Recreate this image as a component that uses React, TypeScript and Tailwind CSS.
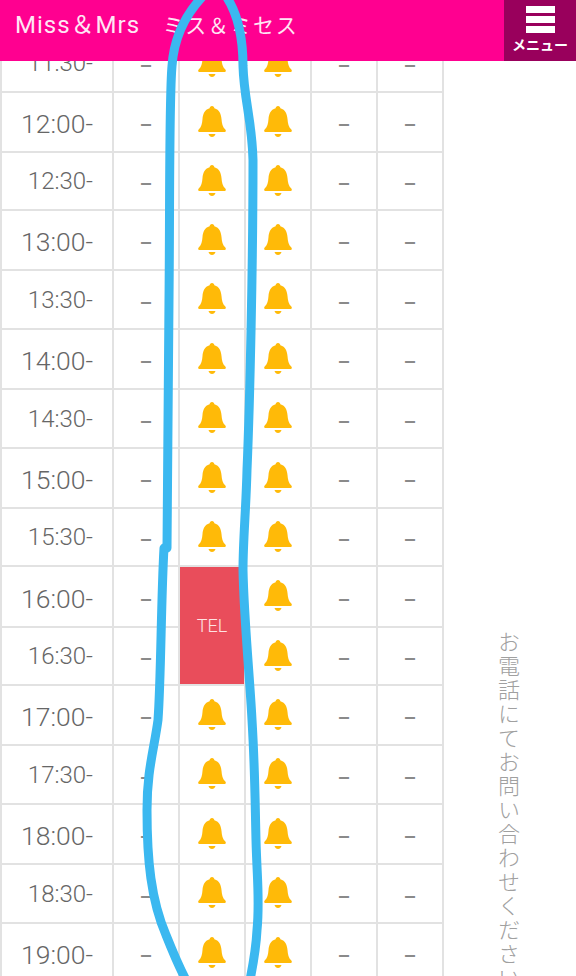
const times = [
  "11:30-", "12:00-", "12:30-", "13:00-", "13:30-", "14:00-", "14:30-", "15:00-",
  "15:30-", "16:00-", "16:30-", "17:00-", "17:30-", "18:00-", "18:30-", "19:00-",
];

const Bell = () => (
  <svg viewBox="0 0 28 33" className="w-[28px] h-[33px]" fill="#ffba08">
    <path d="M14 0c1.400 0 2.300 1 2.400 2.300C21.500 3.800 23 8 23.500 13c.4 4.500 1 8 3.800 10.500 1 1 .5 2.500-1 2.500H1.700c-1.500 0-2-1.500-1-2.500C3.500 21 4.100 17.500 4.500 13 5 8 6.500 3.800 11.600 2.300 11.700 1 12.600 0 14 0z" />
    <path d="M10.500 28h7c-.5 2-2 3-3.500 3s-3-1-3.500-3z" />
  </svg>
);

const Cell = ({ children }: { children?: React.ReactNode }) => (
  <div className="flex items-center justify-center border-r-2 border-b-2 border-[#e2e2e2]">
    {children}
  </div>
);

const Dash = () => <span className="pt-[6px] text-[20px] leading-none font-medium text-[#8a8a8a]">–</span>;

function TimeCell({ time }: { time: string }) {
  const isHour = time.endsWith(":00-");
  return (
    <div className="flex items-center justify-end pr-[19px] border-x-2 border-b-2 border-[#e2e2e2] font-light text-[#666666]">
      <span className={isHour ? "pt-[4px] text-[26.5px]" : "text-[24px]"}>{time}</span>
    </div>
  );
}

export default function App() {
  return (
    <div className="relative w-[576px] h-[976px] overflow-hidden bg-white font-['Roboto','Noto_Sans_CJK_JP',sans-serif]">
      <header className="relative z-10 flex h-[61px] bg-[#ff0090]">
        <h1 className="flex-1 pl-[15px] pt-[8px] text-[24px] leading-[32px] tracking-[1px] text-[#ffe6f5] font-normal whitespace-pre">
          Miss＆Mrs<span className="text-[21px] tracking-[1.6px] font-['Noto_Sans_CJK_JP',sans-serif]">　ミス＆ミセス</span>
        </h1>
        <button className="flex w-[72px] flex-col items-center bg-[#99005c] pt-[6px] text-white">
          <span className="flex w-[29px] flex-col gap-[3px]">
            <span className="h-[7px] bg-white" />
            <span className="h-[7px] bg-white" />
            <span className="h-[7px] bg-white" />
          </span>
          <span className="mt-[3px] text-[14px] leading-[16px] font-bold font-['Noto_Sans_CJK_JP',sans-serif]">
            メニュー
          </span>
        </button>
      </header>

      <div className="flex -mt-[27px]">
        <div className="grid w-[444px] shrink-0 grid-cols-[114px_66px_66px_66px_66px_66px] grid-rows-[59px_60px_58px_60px_59px_60px_59px_60px_58px_61px_58px_60px_59px_60px_59px_60px]">
          {times.map((time) => (
            <div key={time} className="contents">
              <TimeCell time={time} />
              <Cell><Dash /></Cell>
              {time === "16:00-" ? (
                <div className="row-span-2 border-r-2 border-b-2 border-[#e2e2e2]">
                  <div className="flex h-full items-center justify-center bg-[#e94d5b] text-[18px] text-[#ffe3e3] font-light">
                    TEL
                  </div>
                </div>
              ) : time === "16:30-" ? null : (
                <Cell><Bell /></Cell>
              )}
              <Cell><Bell /></Cell>
              <Cell><Dash /></Cell>
              <Cell><Dash /></Cell>
            </div>
          ))}
        </div>
        <div className="flex-1 pl-[53px] pt-[597px]">
          <p className="h-[400px] text-[22px] leading-[24px] tracking-[2px] text-[#a0a0a0] font-light [writing-mode:vertical-rl] font-['Noto_Sans_CJK_JP',sans-serif]">
            お電話にてお問い合わせください
          </p>
        </div>
      </div>

      {/* hand drawn marker on top of the screenshot */}
      <svg className="absolute inset-0 z-20 pointer-events-none" width="576" height="976" fill="none" stroke="#3bb8f0" strokeWidth="9" strokeLinecap="round" strokeLinejoin="round">
        <path d="M203 -4C186 14 174 36 172 66C169 100 170 200 169 300C168 400 168 480 167 548" />
        <path d="M164 548C161 600 161 680 158 720C154 750 147 770 147 810C147 860 151 900 166 935C172 950 178 965 186 980" />
        <path d="M226 -4C238 14 243 40 243 66C244 100 252 120 253 160C253 260 250 400 247 470C246 510 243 540 243 570C244 620 250 680 252 720C255 770 255 800 256 840C257 880 260 900 257 930C256 950 253 965 250 980" />
      </svg>
    </div>
  );
}
